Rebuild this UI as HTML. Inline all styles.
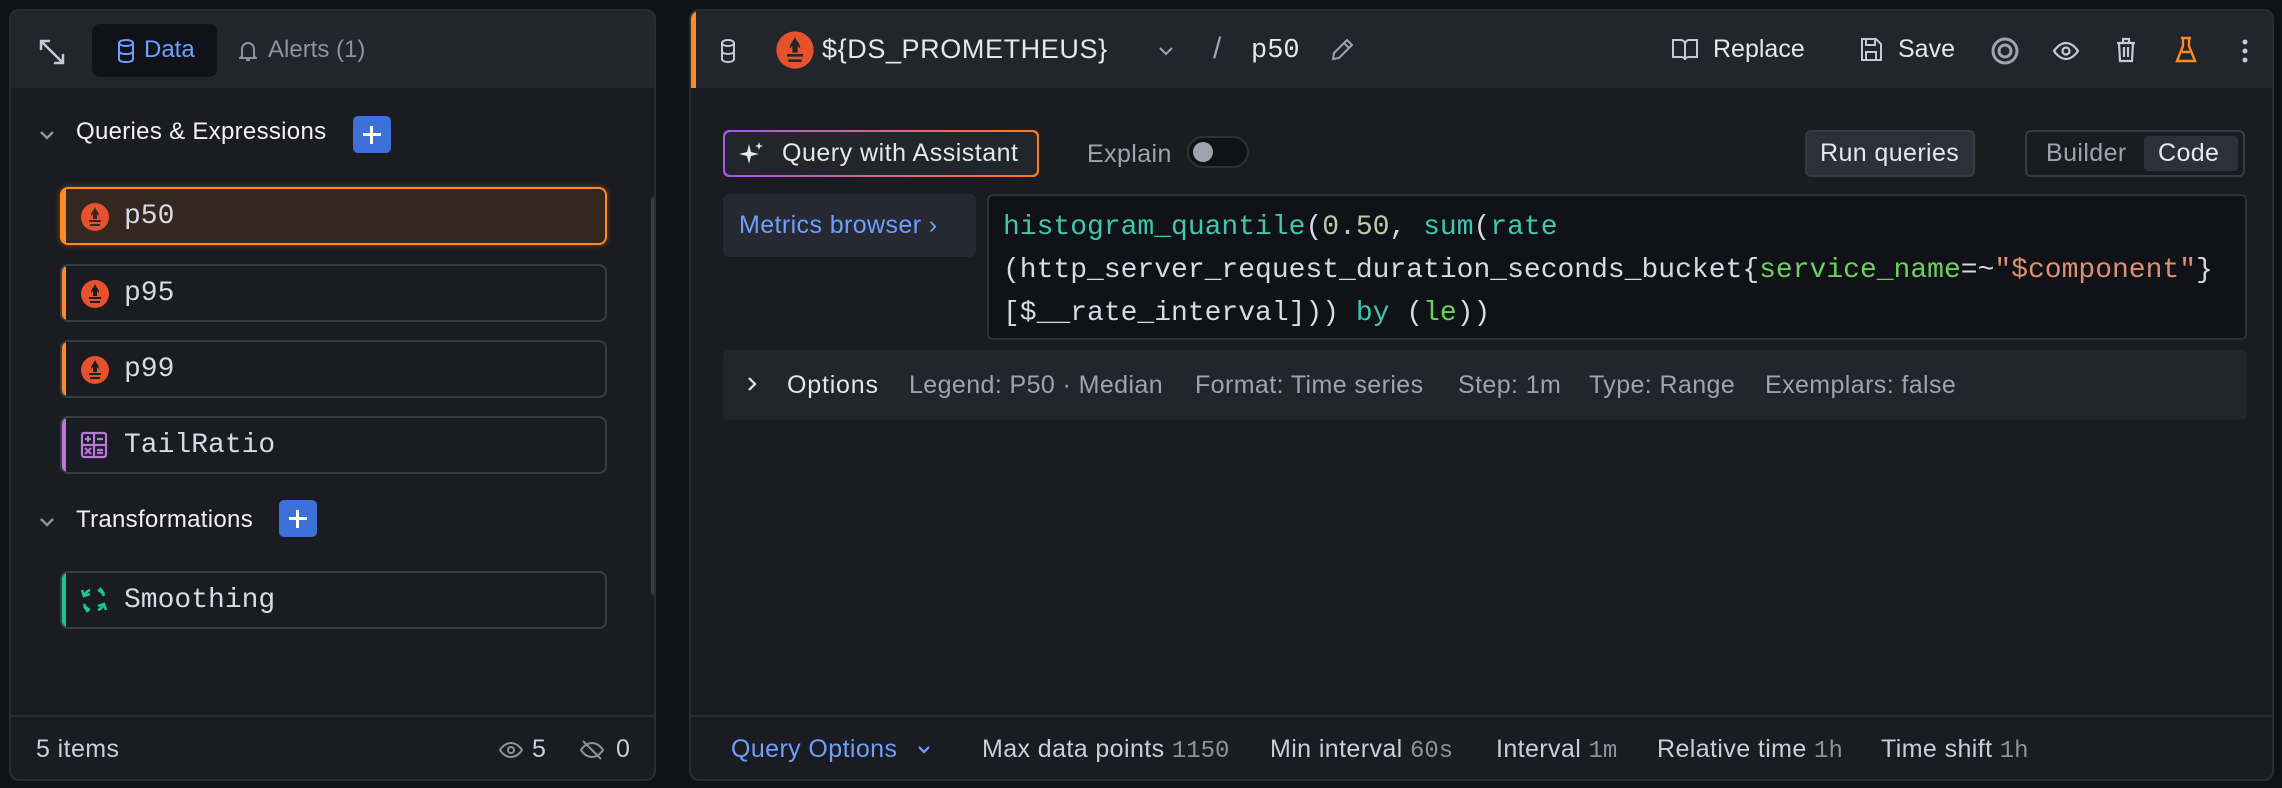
<!DOCTYPE html>
<html><head><meta charset="utf-8"><style>
*{box-sizing:border-box;margin:0;padding:0}
body{width:2282px;height:788px;background:#111217;position:relative;overflow:hidden;font-family:"Liberation Sans",sans-serif;color:#ccccdc;font-size:25px;letter-spacing:.4px}
.a{position:absolute;white-space:nowrap}
.mono{font-family:"Liberation Mono",monospace;letter-spacing:0}
.panel{position:absolute;background:#1b1c21;border:2px solid #2b2d33;border-radius:10px;overflow:hidden}
.hdr{position:absolute;left:0;right:0;top:0;height:77px;background:#22252b}
.item{position:absolute;left:49px;width:547px;height:58px;border:2px solid #3a3c43;border-radius:8px;background:#1b1c21;font-family:"Liberation Mono",monospace;letter-spacing:0;font-size:28px;color:#d8d9e4;overflow:hidden}
.item .bar{position:absolute;left:0;top:0;bottom:0;width:4px}
.item span{position:absolute;left:62px;top:12px}
.item svg{position:absolute;left:18px;top:13px}
.plus{position:absolute;width:38px;height:37px;background:#3d71d9;border-radius:5px}
.plus:before{content:"";position:absolute;left:10px;top:17px;width:18px;height:3px;background:#fff}
.plus:after{content:"";position:absolute;left:17px;top:10px;width:3px;height:18px;background:#fff}
.val{color:#8e929c;font-family:"Liberation Mono",monospace;letter-spacing:0;font-size:24px}
.opt{color:#9fa3ad}
</style></head><body>

<!-- LEFT PANEL -->
<div class="panel" style="left:9px;top:9px;width:647px;height:772px">
  <div class="hdr"></div>
  <svg class="a" style="left:26px;top:26px" width="30" height="30" viewBox="0 0 30 30" fill="none" stroke="#c8c9d2" stroke-width="2.5" stroke-linecap="round"><path d="M4 4L26 26M4 4v8M4 4h8M26 26v-8M26 26h-8"/></svg>
  <div class="a" style="left:81px;top:13px;width:125px;height:53px;background:#111217;border-radius:8px"></div>
  <svg class="a" style="left:106px;top:28px" width="18" height="24" viewBox="0 0 18 24" fill="none" stroke="#6e9fff" stroke-width="2"><ellipse cx="9" cy="4" rx="7" ry="3"/><path d="M2 4v16c0 2 3 3 7 3s7-1 7-3V4M2 12c0 2 3 3 7 3s7-1 7-3"/></svg>
  <div class="a" style="left:133px;top:25px;font-size:24px;letter-spacing:0;color:#6e9fff">Data</div>
  <svg class="a" style="left:228px;top:29px" width="18" height="22" viewBox="0 0 18 22" fill="none" stroke="#8e929c" stroke-width="2"><path d="M3 16V9a6 6 0 0112 0v7l2 2H1zM7 20h4"/></svg>
  <div class="a" style="left:257px;top:25px;font-size:24px;letter-spacing:0;color:#8e929c">Alerts (1)</div>

  <svg class="a" style="left:27px;top:118px" width="18" height="12" viewBox="0 0 18 12" fill="none" stroke="#8e929c" stroke-width="2.5"><path d="M3 3l6 6 6-6"/></svg>
  <div class="a" style="left:65px;top:107px;font-size:24px;letter-spacing:.3px;color:#f0f0f5">Queries &amp; Expressions</div>
  <div class="plus" style="left:342px;top:105px"></div>

  <div class="item" style="top:176px;border-color:#ff8a1f;background:#332720;box-shadow:0 0 6px #ff8a1f66"><div class="bar" style="background:#ff8a1f"></div>
   <svg width="30" height="30" viewBox="0 0 30 30"><circle cx="15" cy="15" r="14" fill="#e6522c"/><path d="M15 4c0 4 4 5 4 10l-2 -2 0 5h-4v-5l-2 2c0-5 4-6 4-10zM9 18h12v2H9zM10 22h10v2H10z" fill="#332720"/></svg><span>p50</span></div>
  <div class="item" style="top:253px"><div class="bar" style="background:#ff8a1f"></div>
   <svg width="30" height="30" viewBox="0 0 30 30"><circle cx="15" cy="15" r="14" fill="#e6522c"/><path d="M15 4c0 4 4 5 4 10l-2 -2 0 5h-4v-5l-2 2c0-5 4-6 4-10zM9 18h12v2H9zM10 22h10v2H10z" fill="#1b1c21"/></svg><span>p95</span></div>
  <div class="item" style="top:329px"><div class="bar" style="background:#ff8a1f"></div>
   <svg width="30" height="30" viewBox="0 0 30 30"><circle cx="15" cy="15" r="14" fill="#e6522c"/><path d="M15 4c0 4 4 5 4 10l-2 -2 0 5h-4v-5l-2 2c0-5 4-6 4-10zM9 18h12v2H9zM10 22h10v2H10z" fill="#1b1c21"/></svg><span>p99</span></div>
  <div class="item" style="top:405px"><div class="bar" style="background:#b877d9"></div>
   <svg width="28" height="28" viewBox="0 0 28 28" fill="none" stroke="#b877d9" stroke-width="2.2"><rect x="2" y="2" width="24" height="24" rx="2"/><path d="M14 2v24M2 14h24M5 8h6M8 5v6M17 8h6M5 17l6 6M11 17l-6 6M17 19h6M17 22h6"/></svg><span>TailRatio</span></div>

  <svg class="a" style="left:27px;top:505px" width="18" height="12" viewBox="0 0 18 12" fill="none" stroke="#8e929c" stroke-width="2.5"><path d="M3 3l6 6 6-6"/></svg>
  <div class="a" style="left:65px;top:495px;font-size:24px;letter-spacing:.3px;color:#f0f0f5">Transformations</div>
  <div class="plus" style="left:268px;top:489px"></div>

  <div class="item" style="top:560px"><div class="bar" style="background:#1fc48a"></div>
   <svg width="28" height="28" viewBox="0 0 28 28" fill="none" stroke="#1fc48a" stroke-width="2.6"><path d="M4 10a10 10 0 016-6M2 4l2 6 6-2M24 18a10 10 0 01-6 6M26 24l-2-6-6 2M18 4a10 10 0 016 6M20 2l4 6M10 24a10 10 0 01-6-6M8 26l-4-6"/></svg><span>Smoothing</span></div>

  <div class="a" style="left:640px;top:186px;width:5px;height:398px;background:#3a3c43;border-radius:3px"></div>
  <div class="a" style="left:0;right:0;top:704px;height:2px;background:#2b2d33"></div>
  <div class="a" style="left:25px;top:724px;color:#ccccdc">5 items</div>
  <svg class="a" style="left:488px;top:730px" width="24" height="18" viewBox="0 0 24 18" fill="none" stroke="#8e929c" stroke-width="2"><path d="M1 9s4-7 11-7 11 7 11 7-4 7-11 7S1 9 1 9z"/><circle cx="12" cy="9" r="3"/></svg>
  <div class="a" style="left:521px;top:724px">5</div>
  <svg class="a" style="left:569px;top:727px" width="24" height="24" viewBox="0 0 24 24" fill="none" stroke="#8e929c" stroke-width="2"><path d="M1 12s4-7 11-7 11 7 11 7-4 7-11 7S1 12 1 12zM3 3l18 18"/></svg>
  <div class="a" style="left:605px;top:724px">0</div>
</div>

<!-- RIGHT PANEL -->
<div class="panel" style="left:689px;top:9px;width:1585px;height:772px">
  <div class="hdr"></div>
  <div class="a" style="left:0;top:0;width:5px;height:77px;background:#ff8a1f"></div>
  <svg class="a" style="left:29px;top:28px" width="16" height="24" viewBox="0 0 16 24" fill="none" stroke="#c8c9d2" stroke-width="2"><ellipse cx="8" cy="4" rx="6" ry="3"/><path d="M2 4v16c0 2 3 3 6 3s6-1 6-3V4M2 12c0 2 3 3 6 3s6-1 6-3"/></svg>
  <svg class="a" style="left:84px;top:19px" width="40" height="40" viewBox="0 0 30 30"><circle cx="15" cy="15" r="14" fill="#e6522c"/><path d="M15 4c0 4 4 5 4 10l-2 -2 0 5h-4v-5l-2 2c0-5 4-6 4-10zM9 18h12v2H9zM10 22h10v2H10z" fill="#22252b"/></svg>
  <div class="a" style="left:131px;top:23px;font-size:27px;letter-spacing:.6px;color:#e6e6ee">${DS_PROMETHEUS}</div>
  <svg class="a" style="left:467px;top:35px" width="16" height="10" viewBox="0 0 16 10" fill="none" stroke="#9fa3ad" stroke-width="2"><path d="M2 2l6 6 6-6"/></svg>
  <div class="a" style="left:522px;top:21px;font-size:30px;color:#9fa3ad">/</div>
  <div class="a mono" style="left:560px;top:25px;font-size:27px;color:#e6e6ee">p50</div>
  <svg class="a" style="left:638px;top:26px" width="26" height="26" viewBox="0 0 26 26" fill="none" stroke="#9fa3ad" stroke-width="2"><path d="M4 22l1-6L18 3l5 5L10 21zM15 6l5 5"/></svg>

  <svg class="a" style="left:980px;top:26px" width="28" height="26" viewBox="0 0 28 26" fill="none" stroke="#c8c9d2" stroke-width="2"><path d="M2 3h8c2 0 4 2 4 4v16c0-2-2-3-4-3H2zM26 3h-8c-2 0-4 2-4 4v16c0-2 2-3 4-3h8z"/></svg>
  <div class="a" style="left:1022px;top:24px;font-size:25px;letter-spacing:0;color:#e6e6ee">Replace</div>
  <svg class="a" style="left:1168px;top:26px" width="24" height="26" viewBox="0 0 24 26" fill="none" stroke="#c8c9d2" stroke-width="2"><path d="M3 2h14l5 5v16H3zM7 2v6h9V2M7 23v-8h10v8"/></svg>
  <div class="a" style="left:1207px;top:24px;font-size:25px;letter-spacing:0;color:#e6e6ee">Save</div>
  <svg class="a" style="left:1300px;top:26px" width="28" height="28" viewBox="0 0 28 28" fill="none" stroke="#9fa3ad" stroke-width="3"><circle cx="14" cy="14" r="12"/><circle cx="14" cy="14" r="6"/></svg>
  <svg class="a" style="left:1362px;top:30px" width="26" height="20" viewBox="0 0 26 20" fill="none" stroke="#c8c9d2" stroke-width="2.2"><path d="M1 10s5-8 12-8 12 8 12 8-5 8-12 8S1 10 1 10z"/><circle cx="13" cy="10" r="3.5"/></svg>
  <svg class="a" style="left:1424px;top:26px" width="22" height="26" viewBox="0 0 22 26" fill="none" stroke="#c8c9d2" stroke-width="2.2"><path d="M2 6h18M8 6V2h6v4M4 6l1 18h12l1-18M9 10v10M13 10v10"/></svg>
  <svg class="a" style="left:1484px;top:25px" width="22" height="28" viewBox="0 0 22 28" fill="none" stroke="#ff8a1f" stroke-width="2.4"><path d="M6 2h10M8 2v8L2 25h18L14 10V2M7 16h8"/></svg>
  <svg class="a" style="left:1550px;top:27px" width="8" height="26" viewBox="0 0 8 26" fill="#c8c9d2"><circle cx="4" cy="4" r="2.5"/><circle cx="4" cy="13" r="2.5"/><circle cx="4" cy="22" r="2.5"/></svg>

  <!-- query with assistant -->
  <div class="a" style="left:32px;top:119px;width:316px;height:47px;border-radius:6px;background:linear-gradient(90deg,#a855f7,#ff7a1a);padding:2px"><div style="width:100%;height:100%;background:#22252b;border-radius:5px"></div></div>
  <svg class="a" style="left:46px;top:129px" width="28" height="28" viewBox="0 0 28 28" fill="#e6e6ee"><path d="M12 4l2 8 8 2-8 2-2 8-2-8-8-2 8-2zM22 2l1 3 3 1-3 1-1 3-1-3-3-1 3-1z"/></svg>
  <div class="a" style="left:91px;top:128px;font-size:25px;letter-spacing:.5px;color:#e6e6ee">Query with Assistant</div>
  <div class="a" style="left:396px;top:129px;color:#9fa3ad">Explain</div>
  <div class="a" style="left:496px;top:125px;width:62px;height:32px;border-radius:16px;background:#111217;border:2px solid #2f3137"></div>
  <div class="a" style="left:502px;top:131px;width:20px;height:20px;border-radius:50%;background:#9fa3ad"></div>

  <div class="a" style="left:1114px;top:119px;width:170px;height:47px;border-radius:6px;background:#2d3038;border:2px solid #3a3c43"></div>
  <div class="a" style="left:1129px;top:128px;color:#e6e6ee">Run queries</div>
  <div class="a" style="left:1334px;top:119px;width:220px;height:47px;border-radius:6px;border:2px solid #3a3c43"></div>
  <div class="a" style="left:1453px;top:125px;width:94px;height:35px;border-radius:4px;background:#2d3038"></div>
  <div class="a" style="left:1355px;top:128px;color:#9fa3ad">Builder</div>
  <div class="a" style="left:1467px;top:128px;color:#e6e6ee">Code</div>

  <!-- metrics browser -->
  <div class="a" style="left:32px;top:183px;width:253px;height:63px;border-radius:6px;background:#262931"></div>
  <div class="a" style="left:48px;top:200px;color:#6e9fff">Metrics browser ›</div>
  <!-- code -->
  <div class="a mono" style="left:296px;top:183px;width:1260px;height:146px;border-radius:6px;background:#111217;border:2px solid #2f3137;font-size:28px;line-height:43px;padding:10px 0 0 14px;color:#d8d9e4;white-space:pre"><span style="color:#3fc7b0">histogram_quantile</span>(<span style="color:#b5cea8">0.50</span>, <span style="color:#3fc7b0">sum</span>(<span style="color:#3fc7b0">rate</span>
(http_server_request_duration_seconds_bucket{<span style="color:#6ccf5e">service_name</span>=~<span style="color:#e09070">"$component"</span>}
[$__rate_interval])) <span style="color:#3fc7b0">by</span> (<span style="color:#6ccf5e">le</span>))</div>

  <!-- options -->
  <div class="a" style="left:32px;top:339px;width:1524px;height:70px;border-radius:6px;background:#22252b"></div>
  <svg class="a" style="left:56px;top:365px" width="10" height="16" viewBox="0 0 10 16" fill="none" stroke="#e6e6ee" stroke-width="2.2"><path d="M2 2l6 6-6 6"/></svg>
  <div class="a" style="left:96px;top:360px;color:#e6e6ee;letter-spacing:.8px">Options</div>
  <div class="a opt" style="left:218px;top:360px">Legend: P50 · Median</div>
  <div class="a opt" style="left:504px;top:360px">Format: Time series</div>
  <div class="a opt" style="left:767px;top:360px">Step: 1m</div>
  <div class="a opt" style="left:898px;top:360px">Type: Range</div>
  <div class="a opt" style="left:1074px;top:360px">Exemplars: false</div>

  <div class="a" style="left:0;right:0;top:704px;height:2px;background:#2b2d33"></div>
  <div class="a" style="left:40px;top:724px;color:#6e9fff">Query Options</div>
  <svg class="a" style="left:226px;top:734px" width="14" height="10" viewBox="0 0 14 10" fill="none" stroke="#6e9fff" stroke-width="2.2"><path d="M2 2l5 5 5-5"/></svg>
  <div class="a" style="left:291px;top:724px">Max data points <span class="val">1150</span></div>
  <div class="a" style="left:579px;top:724px">Min interval <span class="val">60s</span></div>
  <div class="a" style="left:805px;top:724px">Interval <span class="val">1m</span></div>
  <div class="a" style="left:966px;top:724px">Relative time <span class="val">1h</span></div>
  <div class="a" style="left:1190px;top:724px">Time shift <span class="val">1h</span></div>
</div>
</body></html>
